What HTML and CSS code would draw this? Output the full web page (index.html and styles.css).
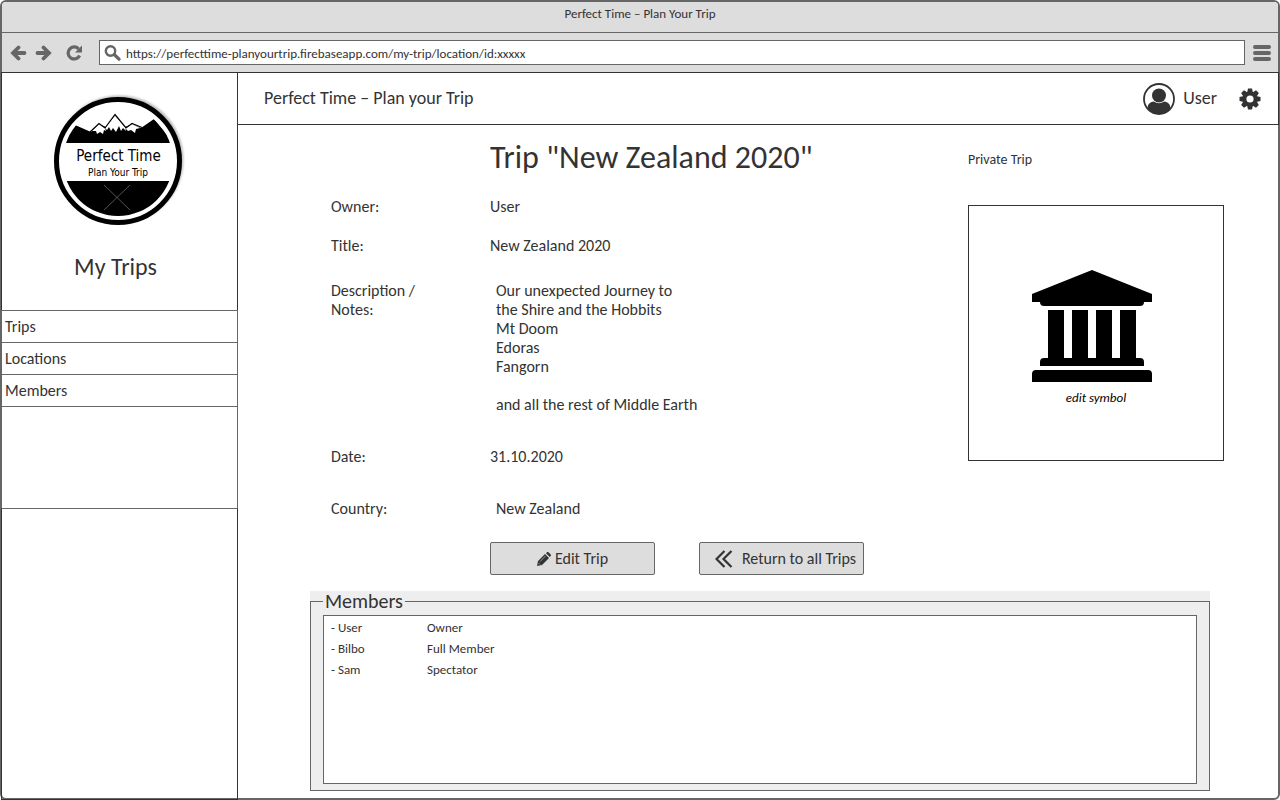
FILE: index.html
```html
<!DOCTYPE html>
<html lang="en">
<head>
<meta charset="utf-8">
<meta name="viewport" content="width=device-width, initial-scale=1">
<title>Perfect Time – Plan Your Trip</title>
<link rel="stylesheet" href="styles.css">
</head>
<body>
<div class="window">
  <div class="titlebar">Perfect Time – Plan Your Trip</div>
  <div class="toolbar">
    <button class="tool" type="button" aria-label="Back">
      <svg width="17" height="16" viewBox="0 0 17 16"><path d="M8.500 2.500 3 8l5.500 5.500M3 8h11.500" fill="none" stroke="#666" stroke-width="3.800" stroke-linecap="round"/></svg>
    </button>
    <button class="tool" type="button" aria-label="Forward">
      <svg width="17" height="16" viewBox="0 0 17 16"><path d="M8.500 2.500 14 8l-5.500 5.500M14 8H2.500" fill="none" stroke="#666" stroke-width="3.800" stroke-linecap="round"/></svg>
    </button>
    <button class="tool reload" type="button" aria-label="Reload">
      <svg width="17" height="16" viewBox="0 0 17 16"><path d="M12.500 3.800A6 6 0 1 0 13.600 10.500" fill="none" stroke="#666" stroke-width="3.200"/><path d="M16 .5v7H9z" fill="#666"/></svg>
    </button>
    <label class="address">
      <svg width="17" height="16" viewBox="0 0 17 16"><circle cx="6.500" cy="6" r="4.700" fill="none" stroke="#666" stroke-width="2.400"/><path d="M10.200 9.500l4.800 4.700" stroke="#666" stroke-width="3.200" stroke-linecap="round"/></svg>
      <input type="text" aria-label="Address" value="https://perfecttime-planyourtrip.firebaseapp.com/my-trip/location/id:xxxxx">
    </label>
    <button class="tool menu" type="button" aria-label="Menu">
      <svg width="18" height="16" viewBox="0 0 18 16"><path d="M2 2h14M2 8h14M2 14h14" stroke="#666" stroke-width="4" stroke-linecap="round"/></svg>
    </button>
  </div>
  <div class="page">
    <aside class="sidebar">
      <div class="brand">
        <svg class="logo" width="132" height="132" viewBox="0 0 132 132" role="img" aria-label="Perfect Time, Plan Your Trip">
          <defs>
            <clipPath id="disc"><circle cx="65" cy="67" r="55"/></clipPath>
            <filter id="soft"><feGaussianBlur stdDeviation="0.8"/></filter>
          </defs>
          <circle cx="66.500" cy="65.500" r="64" fill="#bbb" filter="url(#soft)"/>
          <circle cx="65" cy="67" r="61.500" fill="#fff" stroke="#000" stroke-width="5"/>
          <g clip-path="url(#disc)">
            <path d="M10 49 22 31l16 7 8-8 7 3 9-12 10 12 7-3 9 4 13-9 20 24z"/>
            <path d="M39 37l7-7 6 4 1 3-2-1-1 4-3-2-3 2-1-3zM52 34l10-12.500 10 11.500 1 4-3-3-2 3-2-5-3 6-3-4-2 3-2-4-2 3zM72 34l7-4 8 4-4 1-1 4-4-3-3 1z" fill="#fff"/>
            <path d="M37 38l9-8.500 6 4.500L62 20.500 73 34l6-4.500 10 4" fill="none" stroke="#000" stroke-width="1.200"/>
            <path d="M0 87h132v45H0z"/>
            <path d="M51 91l26 25M77 91l-26 25" stroke="#777" stroke-width="0.700"/>
          </g>
          <text class="logo-name" x="65.500" y="67">Perfect Time</text>
          <text class="logo-tag" x="65" y="82">Plan Your Trip</text>
        </svg>
        <h2>My Trips</h2>
      </div>
      <nav aria-label="My Trips">
        <a href="#">Trips</a>
        <a href="#">Locations</a>
        <a href="#members">Members</a>
      </nav>
      <div class="rest"></div>
    </aside>
    <main class="main">
      <header class="header">
        <span>Perfect Time – Plan your Trip</span>
        <a class="user" href="#">
          <svg width="32" height="32" viewBox="0 0 32 32"><circle cx="16" cy="16" r="15" fill="#fff" stroke="#333" stroke-width="1.800"/><circle cx="16" cy="12.500" r="7" fill="#333"/><path d="M4.500 26c0-4.500 2-7 6.500-7.500 3 2.300 7 2.300 10 0 4.500.5 6.500 3 6.500 7.500-6.500 6.500-16.500 6.500-23 0z" fill="#333"/></svg>
          User
        </a>
        <button class="settings" type="button" aria-label="Settings">
          <svg width="22" height="22" viewBox="-11 -11 22 22"><g fill="#333"><circle r="7.600"/><path id="tooth" d="M-2-10.500h4L3-6V6l-1 4.500h-4L-3 6V-6z"/><use href="#tooth" transform="rotate(45)"/><use href="#tooth" transform="rotate(90)"/><use href="#tooth" transform="rotate(135)"/></g><circle r="3.600" fill="#fff"/></svg>
        </button>
      </header>
      <section class="trip">
        <div class="details">
          <h1>Trip "New Zealand 2020"</h1>
          <dl>
            <dt>Owner:</dt><dd>User</dd>
            <dt>Title:</dt><dd>New Zealand 2020</dd>
            <dt class="wide-gap">Description /<br>Notes:</dt>
            <dd class="wide-gap inset">Our unexpected Journey to<br>the Shire and the Hobbits<br>Mt Doom<br>Edoras<br>Fangorn<br><br>and all the rest of Middle Earth</dd>
            <dt class="large-gap">Date:</dt><dd class="large-gap">31.10.2020</dd>
            <dt class="large-gap">Country:</dt><dd class="large-gap inset">New Zealand</dd>
          </dl>
          <div class="actions">
            <button class="button" type="button">
              <svg width="14" height="14" viewBox="0 0 14 14"><path d="M0 14l1-5 7-7 4 4-7 7zM9 1.200 10 .3c.5-.4 1-.4 1.500 0l2.200 2.200c.4.500.4 1 0 1.500l-.9 1z" fill="#333"/><path d="M3 9.500l5.500-5.500M1.500 11l1.500 1.500" stroke="#ddd" stroke-width=".6"/></svg>
              Edit Trip
            </button>
            <button class="button return" type="button">
              <svg width="18" height="18" viewBox="0 0 18 18"><path d="M9.500 1 1.500 9l8 8M16.500 1l-8 8 8 8" fill="none" stroke="#333" stroke-width="2.200"/></svg>
              Return to all Trips
            </button>
          </div>
        </div>
        <div class="side">
          <p class="privacy">Private Trip</p>
          <button class="symbol" type="button">
            <svg width="120" height="112" viewBox="0 0 120 112"><path d="M60 0l60 24v8h-8q0 4-4 4H12q-4 0-4-4H0v-8zM16 40h16v48h8V40h16v48h8V40h16v48h8V40h16v48h4q4 0 4 4v4H8v-4q0-4 4-4h4zM4 100h112q4 0 4 4v8H0v-8q0-4 4-4z"/></svg>
            <span>edit symbol</span>
          </button>
        </div>
      </section>
      <section class="members" id="members">
        <fieldset>
          <legend>Members</legend>
          <div class="list">
            <table>
              <tbody>
                <tr><td>- User</td><td>Owner</td></tr>
                <tr><td>- Bilbo</td><td>Full Member</td></tr>
                <tr><td>- Sam</td><td>Spectator</td></tr>
              </tbody>
            </table>
          </div>
        </fieldset>
      </section>
    </main>
  </div>
</div>
</body>
</html>
```
FILE: styles.css
```css
*, *::before, *::after { box-sizing: border-box; }
body {
  margin: 0;
  background: #fff;
  color: #333;
  font-family: Carlito, Lato, sans-serif;
  font-size: 16px;
  line-height: 19px;
}
button, input { font: inherit; color: inherit; }
button { padding: 0; border: 0; background: none; cursor: pointer; }
a { color: inherit; text-decoration: none; }
svg { display: block; flex: none; }
h1, h2, p, dl, dd { margin: 0; font-weight: 400; }

.window {
  display: flex;
  flex-direction: column;
  min-height: 100vh;
  border: 2px solid #666;
  border-radius: 6px;
}
.titlebar {
  height: 31px;
  border-bottom: 1px solid #666;
  border-radius: 4px 4px 0 0;
  background: #ddd;
  font-size: 13px;
  line-height: 24px;
  text-align: center;
}
.toolbar {
  display: flex;
  align-items: center;
  gap: 8px;
  height: 39px;
  padding: 0 7px 0 8px;
  background: #ddd;
}
.reload { margin: 0 8px 0 6px; }
.address {
  flex: 1;
  display: flex;
  align-items: center;
  gap: 5px;
  height: 25px;
  padding: 0 4px;
  border: 1px solid #666;
  background: #fff;
}
.address input {
  flex: 1;
  min-width: 0;
  padding: 2px 0 0;
  border: 0;
  outline: 0;
  background: none;
  font-size: 13px;
}

.page { flex: 1; display: flex; }
.sidebar {
  display: flex;
  flex-direction: column;
  width: 237px;
  margin: 0 0 -2px -1px;
}
.brand {
  height: 238px;
  padding: 21px 8px 0 0;
  border: 1px solid #333;
  border-bottom: 0;
}
.logo { margin: 0 auto 0 51px; }
.logo text { text-anchor: middle; font-family: "DejaVu Sans Condensed", "DejaVu Sans", sans-serif; }
.logo-name { font-size: 15px; }
.logo-tag { font-size: 10px; }
h2 { margin-top: 27px; font-size: 24px; line-height: 28px; text-align: center; }
nav {
  height: 198px;
  border: solid #666;
  border-width: 1px 1px 0;
}
nav a {
  display: block;
  padding: 6px 3px;
  border-bottom: 1px solid #666;
}
.rest { flex: 1; border: 1px solid #333; border-top-color: #666; }

.main { flex: 1; min-width: 0; }
.header {
  display: flex;
  align-items: center;
  height: 53px;
  margin-right: -1px;
  padding: 0 17px 0 26px;
  border: 1px solid #333;
  border-left: 0;
  font-size: 18px;
}
.user { display: flex; align-items: center; gap: 8px; margin-left: auto; }
.settings { margin-left: 22px; }

.trip { display: flex; padding: 14px 54px 0 93px; }
.details { flex: 1; }
h1 { padding-left: 159px; font-size: 32px; line-height: 38px; }
dl { display: grid; grid-template-columns: 159px 1fr; }
dt, dd { margin-top: 20px; }
.wide-gap { margin-top: 26px; }
.large-gap { margin-top: 33px; }
.inset { padding-left: 6px; }
.actions { display: flex; gap: 44px; margin-top: 24px; padding-left: 159px; }
.button {
  display: flex;
  align-items: center;
  justify-content: center;
  gap: 4px;
  width: 165px;
  height: 33px;
  border: 1px solid #666;
  border-radius: 2px;
  background: #ddd;
}
.return { gap: 9px; padding-left: 8px; }
.side { width: 256px; }
.privacy { padding-top: 11px; font-size: 14px; }
.symbol {
  display: flex;
  flex-direction: column;
  align-items: center;
  justify-content: center;
  gap: 6px;
  width: 100%;
  aspect-ratio: 1;
  margin-top: 36px;
  padding: 10px 8px 0 0;
  border: 1px solid #333;
  color: #000;
  font-size: 13px;
  font-style: italic;
}
.symbol span { padding-left: 8px; }

.members { margin: 16px 68px 7px 72px; background: #eee; }
fieldset {
  min-width: 0;
  margin: 0;
  padding: 3px 12px 6px;
  border: 1px solid #666;
}
legend { padding: 0 2px; font-size: 20px; line-height: 21px; }
.list { min-height: 169px; border: 1px solid #666; background: #fff; }
table { border-spacing: 0; margin: 1px 7px; font-size: 13px; line-height: 21px; }
td { padding: 0; }
td:first-child { width: 96px; }
```
